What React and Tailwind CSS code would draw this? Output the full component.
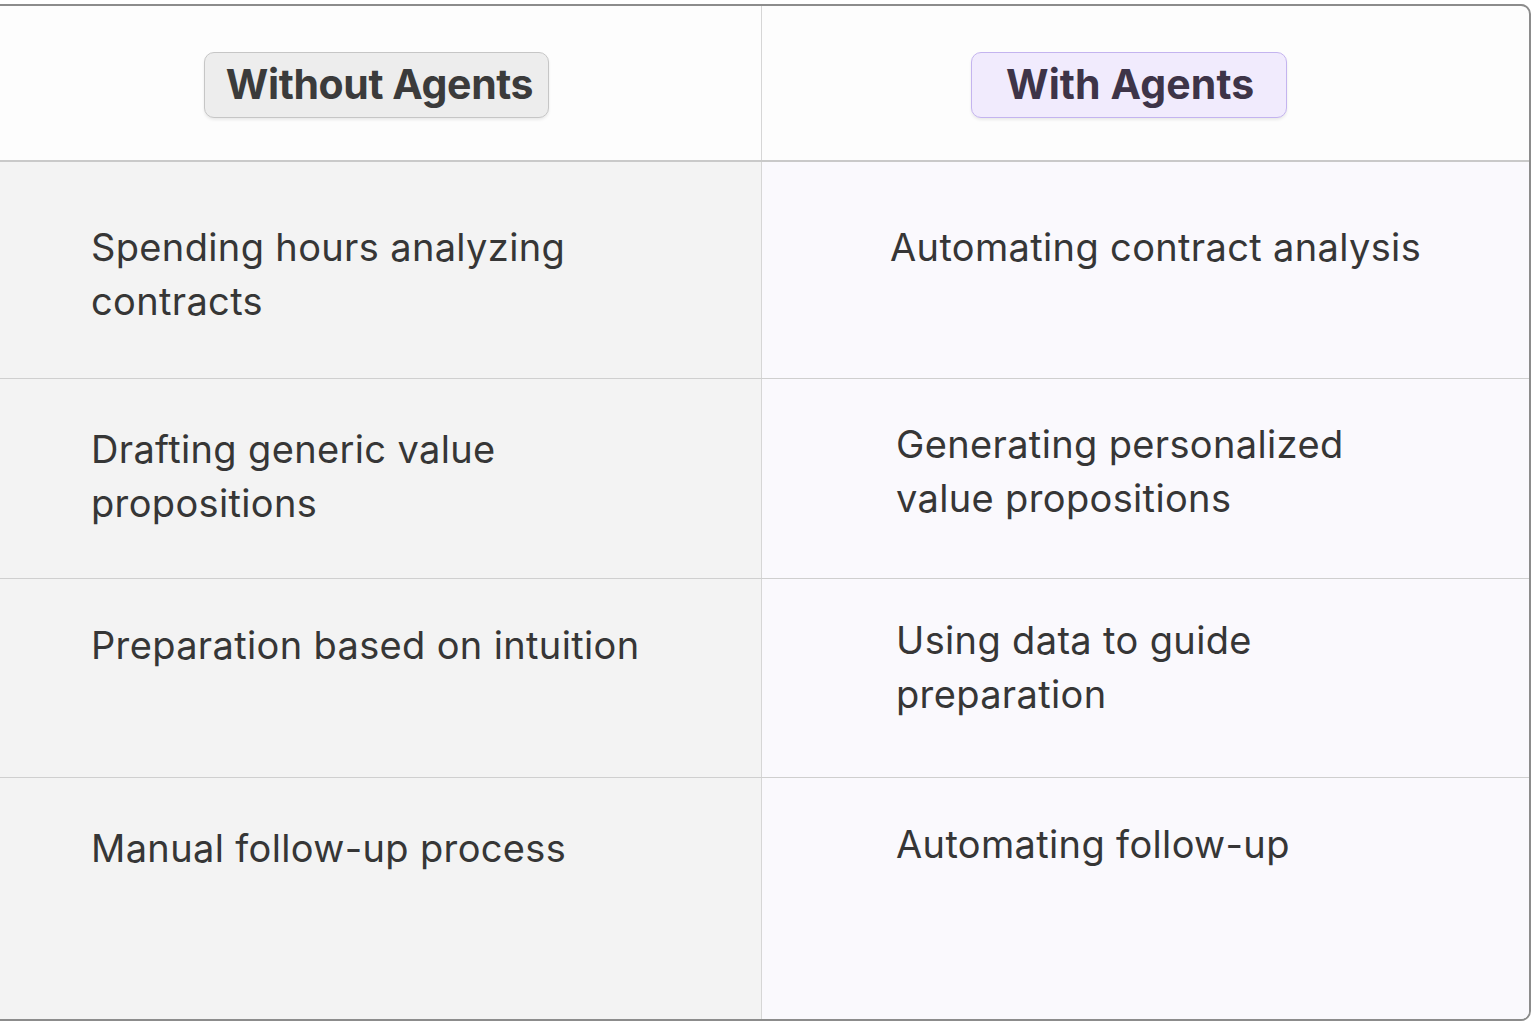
const rows = [
  {
    left: ['Spending hours analyzing', 'contracts'],
    right: ['Automating contract analysis'],
    h: 'h-[217px]',
    lp: 'pt-[58px]',
    rp: 'pt-[58px] pl-[128px]',
  },
  {
    left: ['Drafting generic value', 'propositions'],
    right: ['Generating personalized', 'value propositions'],
    h: 'h-[200px]',
    lp: 'pt-[43px]',
    rp: 'pt-[38px] pl-[134px]',
  },
  {
    left: ['Preparation based on intuition'],
    right: ['Using data to guide', 'preparation'],
    h: 'h-[199px]',
    lp: 'pt-[39px]',
    rp: 'pt-[34px] pl-[134px]',
  },
  {
    left: ['Manual follow-up process'],
    right: ['Automating follow-up'],
    h: 'h-[241px]',
    lp: 'pt-[43px]',
    rp: 'pt-[39px] pl-[134px]',
  },
];

function Cell({ lines, className }) {
  return (
    <div className={className}>
      {lines.map((l) => (
        <div key={l} className="text-[38px] leading-[54px] text-[#363636] tracking-[0.35px]">{l}</div>
      ))}
    </div>
  );
}

export default function App() {
  return (
    <div className="w-[1536px] h-[1024px] bg-white overflow-hidden pt-[4px]" style={{ fontFamily: 'Inter, "Noto Sans", sans-serif' }}>
      <div className="-ml-[10px] w-[1541px] border-2 border-[#8c8c8c] rounded-r-[10px] overflow-hidden bg-[#fdfdfd]">
        {/* header */}
        <div className="grid grid-cols-[770px_1fr] h-[156px] border-b-2 border-[#c9c9c9]">
          <div className="flex items-center justify-center border-r border-[#d6d6d6] pt-[4px]">
            <div className="h-[66px] pl-[21px] pr-[15px] flex items-center rounded-[10px] border border-[#c6c6c6] bg-[#ededed] shadow-[0_2px_3px_rgba(0,0,0,0.08)]">
              <span className="text-[41px] font-bold text-[#3b3b3b] tracking-[-0.4px]">Without Agents</span>
            </div>
          </div>
          <div className="flex items-center pl-[209px] pt-[4px]">
            <div className="h-[66px] pl-[34px] pr-[32px] flex items-center rounded-[10px] border border-[#c4b4ef] bg-[#f1ebfd] shadow-[0_2px_3px_rgba(0,0,0,0.08)]">
              <span className="text-[41px] font-bold text-[#3e3448] tracking-[0.1px]">With Agents</span>
            </div>
          </div>
        </div>
        {rows.map((r, i) => (
          <div
            key={i}
            className={`grid grid-cols-[770px_1fr] ${r.h} ${i < rows.length - 1 ? 'border-b border-[#cfcfcf]' : ''}`}
          >
            <Cell lines={r.left} className={`bg-[#f3f3f3] border-r border-[#d6d6d6] pl-[99px] ${r.lp}`} />
            <Cell lines={r.right} className={`bg-[#faf9fd] ${r.rp}`} />
          </div>
        ))}
      </div>
    </div>
  );
}
